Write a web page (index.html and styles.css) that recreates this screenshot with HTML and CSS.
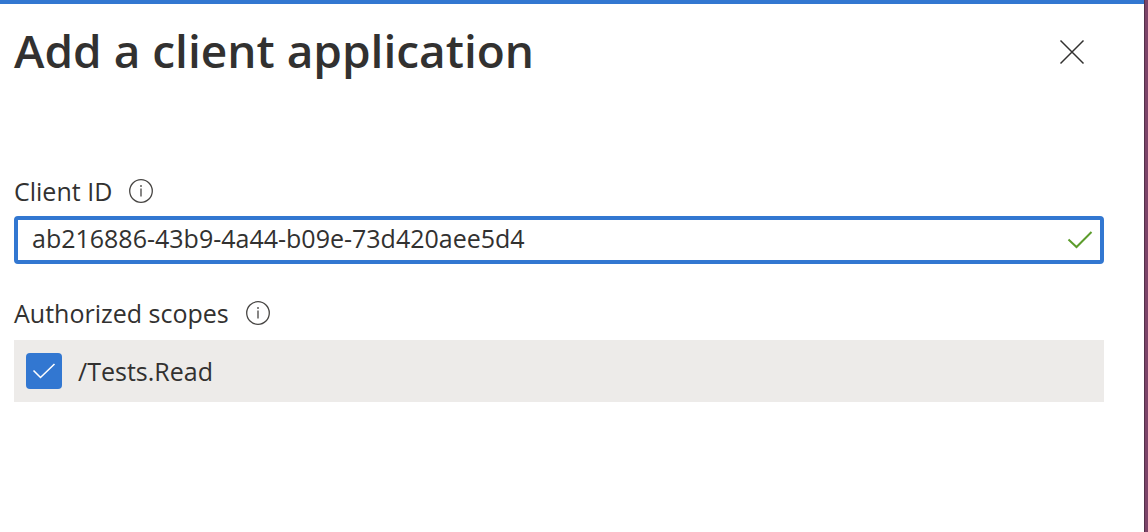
FILE: index.html
```html
<!DOCTYPE html>
<html lang="en">
<head>
<meta charset="utf-8">
<title>Add a client application</title>
<link rel="stylesheet" href="styles.css">
</head>
<body>
<main class="panel">
  <header class="header">
    <h1 class="title">Add a client application</h1>
    <button class="close" type="button" aria-label="Close">
      <svg width="26" height="26" viewBox="0 0 26 26" fill="none" stroke="currentColor" stroke-width="1.5"><path d="M1.5 1.5l23 23M24.5 1.5l-23 23"/></svg>
    </button>
  </header>
  <form class="form">
    <div class="label-row">
      <label for="client-id">Client ID</label>
      <button class="info" type="button" aria-label="About client ID">
        <svg width="26" height="26" viewBox="0 0 26 26" fill="none" stroke="currentColor" stroke-width="1.3"><circle cx="13" cy="13" r="11.3"/><path d="M13 10.5v8M13 7v2"/></svg>
      </button>
    </div>
    <div class="field">
      <input class="text" id="client-id" type="text" value="ab216886-43b9-4a44-b09e-73d420aee5d4">
      <svg class="valid" width="26" height="20" viewBox="0 0 26 20" fill="none" stroke="currentColor" stroke-width="2"><path d="M1.5 9.5l8 7.5L24.5 2"/></svg>
    </div>
    <fieldset class="scopes">
      <legend class="label-row">
        <span>Authorized scopes</span>
        <button class="info" type="button" aria-label="About authorized scopes">
          <svg width="26" height="26" viewBox="0 0 26 26" fill="none" stroke="currentColor" stroke-width="1.3"><circle cx="13" cy="13" r="11.3"/><path d="M13 10.5v8M13 7v2"/></svg>
        </button>
      </legend>
      <label class="scope">
        <span class="tick">
          <input class="box" type="checkbox" checked>
          <svg class="mark" width="36" height="36" viewBox="0 0 36 36" fill="none" stroke="currentColor" stroke-width="1.6"><path d="M7.5 17.5l7 7L28.5 11"/></svg>
        </span>
        <span>/Tests.Read</span>
      </label>
    </fieldset>
  </form>
</main>
<div class="edge"></div>
</body>
</html>
```

FILE: styles.css
```css
* { box-sizing: border-box; }
body {
  display: flex;
  min-height: 100vh;
  margin: 0;
  color: #323130;
  background: #fff;
  font: 25px/32px "Open Sans", "Noto Sans", sans-serif;
}
.panel {
  flex: 1;
  min-width: 0;
  padding: 16px 40px 0 14px;
  border-top: 4px solid #3277d1;
}
.edge {
  width: 4px;
  border-left: 1px solid #55304a;
  background: #7c4468;
}
.header {
  display: flex;
  align-items: center;
  justify-content: space-between;
  padding-right: 19px;
}
.title {
  margin: 0;
  padding-bottom: 4px;
  font-size: 46px;
  line-height: 60px;
  font-weight: 600;
}
button {
  display: flex;
  padding: 0;
  border: 0;
  background: none;
  color: inherit;
}
.form { padding-top: 91px; }
.label-row {
  display: flex;
  align-items: center;
  gap: 16px;
  padding: 0;
}
.info { color: #484644; }
.field {
  display: flex;
  align-items: center;
  height: 48px;
  margin-top: 9px;
  padding: 0 7px 0 14px;
  border: 4px solid #3277d1;
  border-radius: 4px;
}
.text {
  flex: 1;
  min-width: 0;
  padding: 0 0 4px;
  border: 0;
  outline: 0;
  background: none;
  color: inherit;
  font: inherit;
}
.valid { color: #5c9c2c; }
.scopes {
  min-width: 0;
  margin: 33px 0 0;
  padding: 0;
  border: 0;
}
.scope {
  display: flex;
  align-items: center;
  gap: 16px;
  margin-top: 11px;
  padding: 13px 12px;
  background: #edebe9;
}
.tick { display: grid; }
.box {
  grid-area: 1 / 1;
  width: 36px;
  height: 36px;
  margin: 0;
  appearance: none;
  border-radius: 4px;
  background: #3277d1;
}
.mark {
  grid-area: 1 / 1;
  color: #fff;
  pointer-events: none;
}
```
